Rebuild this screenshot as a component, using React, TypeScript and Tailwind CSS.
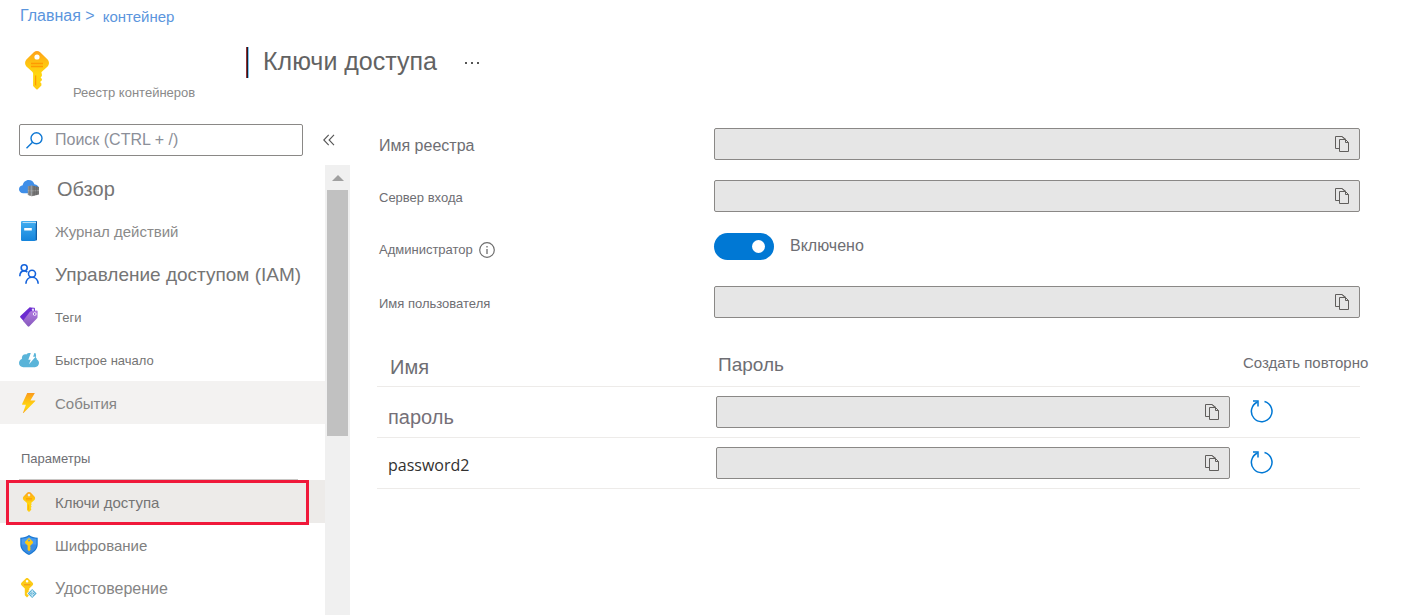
import React, { useState } from "react";

type IconProps = { className?: string };

function KeyIcon({ className }: IconProps) {
  return (
    <svg viewBox="0 0 24 39" className={className} aria-hidden="true">
      <defs>
        <linearGradient id="keyHead" x1="0" y1="0" x2="0" y2="1">
          <stop offset="0" stopColor="#fea11b" />
          <stop offset="0.3" stopColor="#fec111" />
          <stop offset="0.6" stopColor="#ffd70f" />
          <stop offset="1" stopColor="#fecb12" />
        </linearGradient>
      </defs>
      <path
        fill="url(#keyHead)"
        d="M8.800 1.200 1.400 8.600C-.4 10.600-.4 13.600 1.400 15.600L7 20.600c.7.600 1.100 1.100 1.100 1.900V35l3.200 3.300c.5.400.9.400 1.400 0L16.400 34.600v-2.100l-1.300-1.400 1.800-1.800v-1.400l-1.300-1.400 1.300-1.400v-1.800l-.5-1.700c0-.5.200-.8.700-1.200L22.600 15.600c1.800-2 1.800-5 0-7L15.200 1.200c-1.900-1.500-4.500-1.500-6.400 0ZM12 3.400a2.600 2.600 0 1 1 0 5.200 2.600 2.600 0 0 1 0-5.200Z"
      />
      <path fill="#ff9300" opacity=".85" d="M10 24.500h1.200V35L10 33.800zM6 11.800h12v1.500H6zM6 14.700h12v1.500H6z" />
    </svg>
  );
}

function CloudRegistryIcon({ className }: IconProps) {
  return (
    <svg viewBox="0 0 20 20" className={className} aria-hidden="true">
      <path fill="#3f8ee8" d="M4.200 15.200C1.800 15.200 0 13.400 0 11.200 0 9.100 1.600 7.500 3.700 7.300 4.200 4.300 6.600 2 9.700 2c2.700 0 4.900 1.600 5.700 4.200 2.600.2 4.600 2 4.600 4.600v3.400l-1 1Z" />
      <path fill="#8f8f8f" d="m8.800 8.300 4-.900v10.900l-4-1.300z" />
      <path fill="#757575" d="m12.800 7.400 7.200 1.700v7.300l-7.200 1.900z" />
      <path stroke="#b5b5b5" strokeWidth=".6" fill="none" d="m8.800 12.700 4 .2 7.200-.3M12.800 7.400v10.900" />
      <path stroke="#5c5c5c" strokeWidth=".5" fill="none" d="M10.800 8v9.600M15.200 8v9.700M17.600 8.600v8.500" />
    </svg>
  );
}

function BookIcon({ className }: IconProps) {
  return (
    <svg viewBox="0 0 20 20" className={className} aria-hidden="true">
      <defs>
        <linearGradient id="book" x1="0" y1="0" x2="0" y2="1">
          <stop offset="0" stopColor="#43aef0" />
          <stop offset="1" stopColor="#1484dc" />
        </linearGradient>
      </defs>
      <path fill="#0f5ea8" d="M3.500 0H17c.6 0 1 .4 1 1v17.400c0 .6-.4 1-1 1H3.500z" />
      <path fill="#dceefb" d="M3.500 1H17v1.500H3.500z" />
      <path fill="url(#book)" d="M3.300 0A1.300 1.300 0 0 0 2 1.300v17.400A1.300 1.300 0 0 0 3.300 20H15.300c.9 0 1.400-.5 1.400-1.200V1.800H3.800c-.6 0-.6-.8 0-.8h13V0z" />
      <path fill="#fff" d="M5.200 7h7.600v2.500H5.200z" />
    </svg>
  );
}

function PeopleIcon({ className }: IconProps) {
  return (
    <svg viewBox="0 0 20 20" className={className} fill="none" stroke="#1463dc" strokeWidth="1.600" aria-hidden="true">
      <circle cx="5.200" cy="3.800" r="3" />
      <path d="M.8 12.200C.9 8.800 2.700 6.900 5.200 6.900c1.400 0 2.400.4 3.200 1.300" />
      <circle cx="13" cy="9.800" r="3.500" />
      <path d="M6.900 19.800c.2-3.900 2.700-6.500 6.100-6.500 3.500 0 6 2.600 6.200 6.500" />
    </svg>
  );
}

function TagIcon({ className }: IconProps) {
  return (
    <svg viewBox="0 0 20 20" className={className} aria-hidden="true">
      <defs>
        <linearGradient id="tag" x1="0" y1="0" x2="0" y2="1">
          <stop offset="0" stopColor="#b27be0" />
          <stop offset="1" stopColor="#8659bd" />
        </linearGradient>
      </defs>
      <path fill="#6b2bd0" d="M10.200.8c.4-.4.8-.5 1.300-.4l3.400.3c.7 0 1 .4 1 1.100l.4 5L5.500 15 1.400 10.600c-.5-.5-.5-1 0-1.500z" />
      <path fill="url(#tag)" d="m12 4.200 5.400-.6c.8-.1 1.300.4 1.300 1.200l-.2 5.500c0 .4-.1.600-.4.9l-7.700 8c-.5.600-1.100.6-1.700 0L4.600 14.600c-.5-.5-.5-1.100 0-1.700l6.300-8.200c.3-.3.600-.5 1.100-.5Z" />
      <circle cx="14" cy="2.800" r="1.200" fill="#e8dcf8" />
      <circle cx="15.700" cy="7" r="1.400" fill="#8b55cc" stroke="#fff" strokeWidth=".9" />
    </svg>
  );
}

function QuickstartIcon({ className }: IconProps) {
  return (
    <svg viewBox="0 0 20 20" className={className} aria-hidden="true">
      <path fill="#59b4d9" d="M4.300 17.200C1.900 17.200 0 15.300 0 13c0-1.900 1.200-3.400 2.900-4C2.500 6 4.400 4 7.300 4.400 8.200 3.400 9.800 2.900 11.700 3h4.600c.8 1.400 1 3.200.6 4.700.8.300 1 1 .9 1.900 1.400.6 2.200 1.900 2.200 3.500 0 2.300-1.800 4.100-4.100 4.100z" />
      <path fill="#fff" d="M12 2.600h3.600l-1.500 4.200h2.500L10 14.200l1.700-4.500H9.300z" />
    </svg>
  );
}

function BoltIcon({ className }: IconProps) {
  return (
    <svg viewBox="0 0 20 20" className={className} aria-hidden="true">
      <defs>
        <linearGradient id="bolt" x1="0" y1="0" x2="0" y2="1">
          <stop offset="0" stopColor="#fb9a1c" />
          <stop offset="0.5" stopColor="#ffcb12" />
          <stop offset="0.7" stopColor="#ffd70f" />
          <stop offset="1" stopColor="#fba51b" />
        </linearGradient>
      </defs>
      <path fill="url(#bolt)" d="M8.500 0h6.800c.4 0 .5.3.3.6L11.400 7.600h4.500c.5 0 .5.300.2.600L4.500 20c-.4.300-.7.100-.5-.3l2.900-8H3.500c-.4 0-.5-.3-.4-.6L8 .4c.1-.3.300-.4.500-.4Z" />
    </svg>
  );
}

function ShieldKeyIcon({ className }: IconProps) {
  return (
    <svg viewBox="0 0 20 20" className={className} aria-hidden="true">
      <path fill="#1a78d2" d="M10 0c2.700 1.800 5.400 2.500 8.700 2.700v6.800C18.700 14.500 14.400 18 10 20 5.600 18 1.300 14.500 1.300 9.500V2.700C4.600 2.500 7.300 1.800 10 0Z" />
      <path fill="#4a9cf0" d="M10 1.500c2.300 1.500 4.700 2.100 7.500 2.300v5.700c0 4.200-3.700 7.400-7.500 9.200-3.800-1.800-7.500-5-7.500-9.200V3.800c2.800-.2 5.200-.8 7.500-2.300Z" />
      <path fill="#1668c5" d="M2.500 9.500h15c0 4.200-3.700 7.400-7.500 9.200-3.800-1.800-7.500-5-7.500-9.200Z" opacity=".3" />
      <path fill="#ffca12" d="m9 3.700-2.500 2.500c-.7.700-.7 1.500 0 2.200L8.600 10.400v4.300L10 16.200l1.500-1.500v-1.100l-.5-.6.800-.8-.8-.9.500-.5v-.4l2-2c.7-.7.7-1.500 0-2.200L11 3.700c-.6-.5-1.400-.5-2 0Zm1 .9a1 1 0 1 1 0 2 1 1 0 0 1 0-2Z" />
    </svg>
  );
}

function IdentityIcon({ className }: IconProps) {
  return (
    <svg viewBox="0 0 20 20" className={className} aria-hidden="true">
      <path fill="#fccb17" d="M6.800.5 2.700 4.400c-1 1-1 2.200 0 3.200L5.800 10.600v6.700L8 19.500l2.200-2.200v-1.500l-.8-.9 1.100-1-1.100-1.200.9-.9v-1.200l3.100-3c1-1 1-2.200 0-3.200L9.300.5c-.8-.6-1.700-.6-2.500 0ZM8.100 1.900a1.300 1.300 0 1 1 0 2.600 1.300 1.300 0 0 1 0-2.600Z" />
      <path fill="#f59f1b" d="M5 6h6.300v1.400H5z" />
      <path fill="#fff" d="m13.200 9.900 5.500 5.500-5.500 5.500-5.500-5.500z" />
      <path fill="#5aafd3" d="m13.200 11 4.500 4.500-4.500 4.500-4.500-4.500z" />
      <path stroke="#d5eef8" strokeWidth=".9" fill="none" d="M13.200 12v7M10.800 15.500l2.400-2.400 2.400 2.400-2.400 2.400z" />
    </svg>
  );
}

function SmallKeyIcon({ className }: IconProps) {
  return (
    <span className={`flex justify-center ${className ?? ""}`}>
      <KeyIcon className="h-5 w-[14px]" />
    </span>
  );
}

function CopyIcon() {
  return (
    <svg viewBox="0 0 14 16" className="h-4 w-3.5" fill="none" stroke="#605e5c" aria-hidden="true">
      <path d="M4 12.500H.5V.5H7L9.500 3" />
      <path d="M4.500 3.500h6l3 3v9h-9z" />
      <path d="M10.500 3.500v3h3M7 .5l4 3" />
    </svg>
  );
}

function RegenerateIcon() {
  return (
    <svg viewBox="0 0 23 23" className="h-[23px] w-[23px]" fill="none" stroke="#0078d4" strokeWidth="1.500" aria-hidden="true">
      <path d="M14.500 1.500A10.300 10.300 0 1 1 7.500 2" />
      <path d="M3 1h5v5.500" />
    </svg>
  );
}

const menu = [
  { label: "Обзор", Icon: CloudRegistryIcon, text: "pl-0.5 text-[20px] text-[#757575]" },
  { label: "Журнал действий", Icon: BookIcon, text: "text-[15px] text-[#8a8a8a]" },
  { label: "Управление доступом (IAM)", Icon: PeopleIcon, text: "text-[19px] text-[#757575]" },
  { label: "Теги", Icon: TagIcon, text: "text-[13px] text-[#757575]" },
  { label: "Быстрое начало", Icon: QuickstartIcon, text: "text-[13px] text-[#757575]" },
  { label: "События", Icon: BoltIcon, text: "text-[15px] text-[#858585]", hover: true },
];

const settings = [
  { label: "Ключи доступа", Icon: SmallKeyIcon, text: "text-[15px] text-[#757575]", current: true },
  { label: "Шифрование", Icon: ShieldKeyIcon, text: "text-[15px] text-[#808080]" },
  { label: "Удостоверение", Icon: IdentityIcon, text: "text-[16px] text-[#858585]" },
];

type ItemProps = {
  label: string;
  Icon: (p: IconProps) => React.JSX.Element;
  text: string;
  hover?: boolean;
  current?: boolean;
};

function MenuItem({ label, Icon, text, hover, current }: ItemProps) {
  const bg = current ? "bg-[#edebe9]" : hover ? "bg-[#f3f2f1]" : "";
  return (
    <li>
      <a
        href="#"
        aria-current={current ? "page" : undefined}
        className={`relative flex h-[43px] items-center gap-4 whitespace-nowrap pl-[19px] ${bg}`}
      >
        <Icon className="h-5 w-5 shrink-0" />
        <span className={`pt-0.5 ${text}`}>{label}</span>
        {current && <span className="absolute -bottom-0.5 left-1.5 right-4 top-0 border-[3px] border-[#f0183a]" />}
      </a>
    </li>
  );
}

function CopyField({ id, label }: { id: string; label?: string }) {
  return (
    <div className="flex h-8 min-w-0 flex-1 items-center rounded-[2px] border border-[#8a8886] bg-[#e6e6e6]">
      <input id={id} aria-label={label} readOnly className="h-full min-w-0 flex-1 bg-transparent px-2 outline-none" />
      <button type="button" aria-label="Копировать" className="flex h-full items-center px-2.5">
        <CopyIcon />
      </button>
    </div>
  );
}

function PasswordRow({ name, text }: { name: string; text: string }) {
  return (
    <tr className="h-[51px] border-b border-[#edebe9]">
      <th scope="row" className={`pl-[11px] text-left font-normal ${text}`}>
        {name}
      </th>
      <td>
        <div className="flex">
          <CopyField id={`field-${name}`} label={name} />
        </div>
      </td>
      <td className="pl-5">
        <button type="button" aria-label="Создать повторно" className="flex">
          <RegenerateIcon />
        </button>
      </td>
    </tr>
  );
}

export default function App() {
  const [admin, setAdmin] = useState(true);
  return (
    <div className="flex min-h-screen flex-col bg-white font-['Liberation_Sans',Arial,sans-serif] leading-4 text-[#6e6e73]">
      <nav className="flex gap-2 pl-5 pt-2 text-[#5b95dd]">
        <span className="text-[16px]">
          <a href="#">Главная</a> &gt;
        </span>
        <a href="#" className="pt-px text-[15px]">
          контейнер
        </a>
      </nav>

      <header className="mt-[22px] flex items-start pl-[25px]">
        <div className="flex w-[221px] items-start gap-6">
          <KeyIcon className="mt-1 h-[39px] w-6" />
          <span className="mt-[38px] text-[13px] text-[#8a8a8a]">Реестр контейнеров</span>
        </div>
        <div className="flex h-[31px] items-center">
          <span className="h-full w-[3px] border-l border-r border-l-[#963232] border-r-[#7cc4f5] bg-[#201a22]" />
          <h1 className="pb-1 pl-3.5 text-[25px] leading-7 text-[#636363]">Ключи доступа</h1>
          <button type="button" aria-label="Ещё" className="ml-7 flex gap-1">
            <i className="h-0.5 w-0.5 bg-[#555]" />
            <i className="h-0.5 w-0.5 bg-[#555]" />
            <i className="h-0.5 w-0.5 bg-[#555]" />
          </button>
        </div>
      </header>

      <div className="mt-[23px] flex flex-1">
        <aside className="flex w-[350px] shrink-0 flex-col">
          <div className="flex items-center pl-[19px]">
            <label className="flex h-8 w-[284px] items-center gap-3 rounded-[2px] border border-[#8a8886] pl-1.5">
              <svg viewBox="0 0 17 17" className="h-[17px] w-[17px] shrink-0" fill="none" stroke="#0f78d4" strokeWidth="1.400" aria-hidden="true">
                <circle cx="10.500" cy="6.300" r="5.500" />
                <path d="M6.500 10.300.5 16.300" />
              </svg>
              <input
                type="search"
                aria-label="Поиск"
                placeholder="Поиск (CTRL + /)"
                className="min-w-0 flex-1 text-[16px] outline-none placeholder:text-[#8c8f99]"
              />
            </label>
            <button type="button" aria-label="Свернуть меню" className="ml-5">
              <svg viewBox="0 0 12 12" className="h-3 w-3" fill="none" stroke="#555" strokeWidth="1.100" aria-hidden="true">
                <path d="M5.700.8.800 6l4.900 5.200M11 .8 6.100 6l4.900 5.200" />
              </svg>
            </button>
          </div>
          <div className="mt-[9px] flex flex-1">
            <nav className="flex-1 pt-px">
              <ul>
                {menu.map((m) => (
                  <MenuItem key={m.label} {...m} />
                ))}
              </ul>
              <div className="pl-[19px] pr-[27px]">
                <h2 className="flex h-[56px] items-center border-b border-[#c8c6c4] pl-0.5 pt-3.5 text-[13px]">Параметры</h2>
              </div>
              <ul>
                {settings.map((m) => (
                  <MenuItem key={m.label} {...m} />
                ))}
              </ul>
            </nav>
            <div className="flex w-[25px] flex-col bg-[#f0f0f0] px-0.5">
              <svg viewBox="0 0 21 25" className="h-[25px] w-[21px]" aria-hidden="true">
                <path fill="#a0a0a0" d="M5 16h12l-6-6z" />
              </svg>
              <div className="h-[246px] bg-[#c1c1c1]" />
            </div>
          </div>
        </aside>

        <main className="min-w-0 flex-1 pl-[27px] pr-[41px] pt-1">
          <div className="flex flex-col gap-5 pl-0.5">
            <div className="flex items-center">
              <label htmlFor="registry" className="w-[335px] pt-1 text-[16px]">
                Имя реестра
              </label>
              <CopyField id="registry" />
            </div>
            <div className="flex items-center">
              <label htmlFor="server" className="w-[335px] pt-1 text-[13px]">
                Сервер входа
              </label>
              <CopyField id="server" />
            </div>
            <div className="flex h-[34px] items-start">
              <div className="flex w-[335px] items-center gap-1.5 self-center pt-0.5">
                <label htmlFor="admin" className="text-[13px]">
                  Администратор
                </label>
                <svg viewBox="0 0 16 16" className="h-4 w-4" fill="none" stroke="#6e6e6e" aria-hidden="true">
                  <circle cx="8" cy="8" r="7.300" strokeWidth="1.200" />
                  <path d="M8 7v5M8 4v1.500" strokeWidth="1.300" />
                </svg>
              </div>
              <button
                id="admin"
                type="button"
                role="switch"
                aria-checked={admin}
                onClick={() => setAdmin(!admin)}
                className={`mt-px flex h-[27px] w-[60px] items-center rounded-full px-[9px] ${
                  admin ? "justify-end bg-[#0078d4]" : "justify-start bg-[#8a8886]"
                }`}
              >
                <span className="h-[13px] w-[13px] rounded-full bg-white" />
              </button>
              <span className="ml-4 mt-1.5 text-[16px]">{admin ? "Включено" : "Отключено"}</span>
            </div>
            <div className="flex items-center">
              <label htmlFor="user" className="w-[335px] pt-1 text-[13px]">
                Имя пользователя
              </label>
              <CopyField id="user" />
            </div>
          </div>

          <table className="mt-[26px] w-full table-fixed border-collapse">
            <colgroup>
              <col className="w-[339px]" />
              <col />
              <col className="w-[130px]" />
            </colgroup>
            <thead>
              <tr className="h-[42px] border-b border-[#edebe9] text-left">
                <th className="pl-[13px] pt-1 text-[20px] font-normal">Имя</th>
                <th className="pl-0.5 text-[19px] font-normal">Пароль</th>
                <th className="whitespace-nowrap pb-1 pl-[13px] text-[15px] font-normal">Создать повторно</th>
              </tr>
            </thead>
            <tbody>
              <PasswordRow name="пароль" text="pt-2.5 text-[20px] text-[#757078]" />
              <PasswordRow name="password2" text="pt-1 font-['Open_Sans','Noto_Sans',sans-serif] text-[16px] text-[#323130]" />
            </tbody>
          </table>
        </main>
      </div>
    </div>
  );
}
